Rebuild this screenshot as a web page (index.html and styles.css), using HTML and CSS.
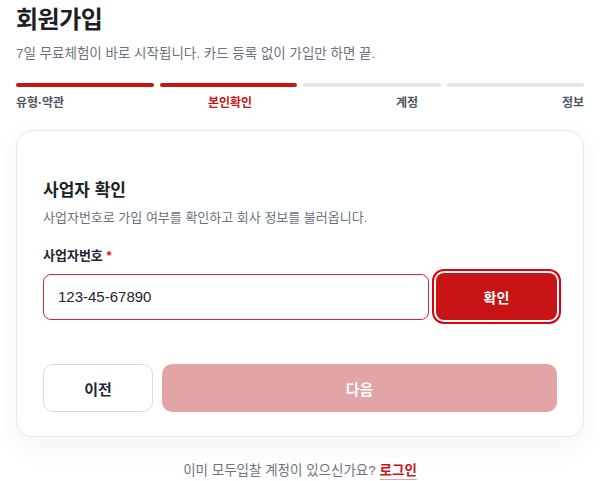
FILE: index.html
```html
<!DOCTYPE html>
<html lang="ko">
<head>
<meta charset="utf-8">
<link rel="stylesheet" href="styles.css">
</head>
<body>
<main class="page">
  <h1 class="title">회원가입</h1>
  <p class="subtitle">7일 무료체험이 바로 시작됩니다. 카드 등록 없이 가입만 하면 끝.</p>
  <div class="steps">
    <div class="bars">
      <span class="bar done"></span>
      <span class="bar done"></span>
      <span class="bar"></span>
      <span class="bar"></span>
    </div>
    <div class="labels">
      <span class="label">유형·약관</span>
      <span class="label active">본인확인</span>
      <span class="label">계정</span>
      <span class="label">정보</span>
    </div>
  </div>
  <section class="card">
    <h2 class="card-title">사업자 확인</h2>
    <p class="card-desc">사업자번호로 가입 여부를 확인하고 회사 정보를 불러옵니다.</p>
    <label class="field-label">사업자번호 <span class="req">*</span></label>
    <div class="field-row">
      <input class="input" type="text" value="123-45-67890">
      <button class="btn-confirm">확인</button>
    </div>
    <div class="actions">
      <button class="btn-prev">이전</button>
      <button class="btn-next">다음</button>
    </div>
  </section>
  <p class="footer">이미 모두입찰 계정이 있으신가요? <a class="login" href="#">로그인</a></p>
</main>
</body>
</html>
```
FILE: styles.css
```css
* { box-sizing: border-box; }
html, body { margin: 0; padding: 0; background: #ffffff; }
body {
  font-family: "Liberation Sans", "Noto Sans CJK KR", sans-serif;
  color: #1f2430;
}
.page { padding: 4px 16px 0; }
.title {
  margin: 0;
  font-size: 24px;
  font-weight: 700;
  line-height: 32px;
  letter-spacing: -0.5px;
  color: #1b1f27;
}
.subtitle {
  margin: 8px 0 0;
  font-size: 13.5px;
  line-height: 20px;
  color: #6b7280;
}
.steps { margin-top: 19px; }
.bars { display: flex; gap: 6px; }
.bar { flex: 1; height: 4px; border-radius: 2px; background: #e5e7eb; }
.bar.done { background: #c81414; }
.labels {
  display: flex;
  justify-content: space-between;
  margin-top: 8px;
}
.label { font-size: 12px; font-weight: 700; color: #4b5563; line-height: 16px; }
.label.active { color: #c81414; }
.card {
  margin-top: 19px;
  border: 1px solid #e6e8ef;
  border-radius: 16px;
  background: #fff;
  padding: 48px 26px 24px;
  box-shadow: 0 10px 30px rgba(20, 24, 40, 0.05);
}
.card-title {
  margin: 0;
  font-size: 17px;
  font-weight: 700;
  line-height: 24px;
  color: #1b1f27;
}
.card-desc {
  margin: 6px 0 0;
  font-size: 13px;
  line-height: 18px;
  color: #6b7280;
}
.field-label {
  display: block;
  margin-top: 20px;
  font-size: 13px;
  font-weight: 700;
  line-height: 18px;
  color: #1f2430;
}
.req { color: #d11a1a; }
.field-row {
  display: flex;
  gap: 7px;
  margin-top: 8px;
  align-items: center;
}
.input {
  flex: 1;
  height: 46px;
  border: 1px solid #d9262d;
  border-radius: 8px;
  padding: 0 14px;
  font-family: "Liberation Sans", sans-serif;
  font-size: 15px;
  color: #1f2430;
  outline: none;
}
.btn-confirm {
  width: 121px;
  height: 47px;
  border: none;
  border-radius: 8px;
  background: #c81414;
  color: #fff;
  font-family: inherit;
  font-size: 14px;
  font-weight: 700;
  box-shadow: 0 0 0 2px #fff, 0 0 0 4px #e0000b;
}
.actions {
  display: flex;
  gap: 9px;
  margin-top: 44px;
}
.btn-prev {
  width: 110px;
  height: 48px;
  border: 1px solid #d6dbe7;
  border-radius: 10px;
  background: #fff;
  color: #1e293b;
  font-family: inherit;
  font-size: 15px;
  font-weight: 700;
}
.btn-next {
  flex: 1;
  height: 48px;
  border: none;
  border-radius: 10px;
  background: #e3a4a5;
  color: #fff;
  font-family: inherit;
  font-size: 15px;
  font-weight: 700;
}
.footer {
  margin: 24px 0 0;
  text-align: center;
  font-size: 13.5px;
  line-height: 20px;
  color: #6b7280;
}
.login {
  color: #c81414;
  font-weight: 700;
  text-decoration: underline;
  text-decoration-color: #e9a0a0;
  text-underline-offset: 4px;
}
```
